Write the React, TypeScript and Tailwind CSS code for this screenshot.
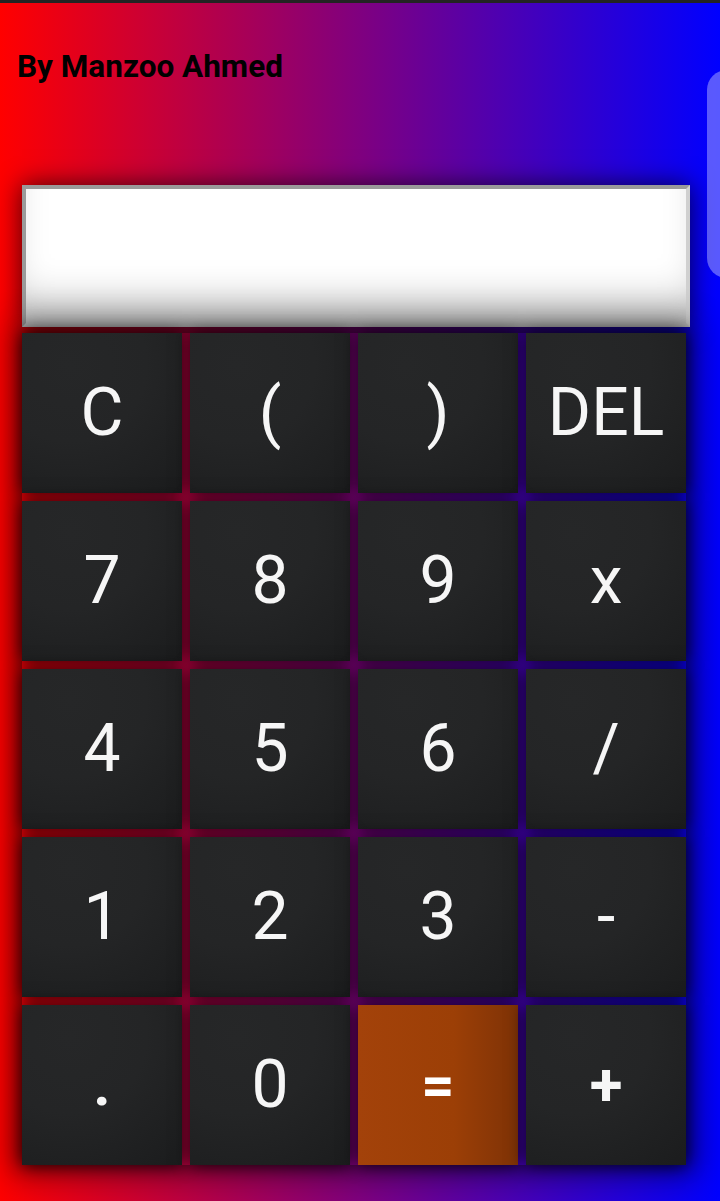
import React from "react";

const keys: { label: string; eq?: boolean }[] = [
  { label: "C" }, { label: "(" }, { label: ")" }, { label: "DEL" },
  { label: "7" }, { label: "8" }, { label: "9" }, { label: "x" },
  { label: "4" }, { label: "5" }, { label: "6" }, { label: "/" },
  { label: "1" }, { label: "2" }, { label: "3" }, { label: "-" },
  { label: "." }, { label: "0" }, { label: "=", eq: true }, { label: "+" },
];

export default function App() {
  return (
    <div
      className="relative w-[720px] h-[1201px] overflow-hidden border-t-[3px] border-[#232323] bg-[linear-gradient(to_right,#ff0000,#0000ff)]"
      style={{ fontFamily: "Roboto, 'Noto Sans', sans-serif" }}
    >
      <div className="pl-[17px] pt-[46px] text-[31.5px] font-bold leading-[36px] text-black">
        By Manzoo Ahmed
      </div>

      <div className="ml-[22px] mt-[100px] w-[668px] h-[142px] border-[4px] border-t-[#9a9a9a] border-l-[#9a9a9a] border-b-[#c4c4c4] border-r-[#d0d0d0] bg-white shadow-[inset_0_-40px_40px_-20px_rgba(0,0,0,0.28),0_0_24px_rgba(0,0,0,0.7)]" />

      <div className="ml-[22px] mt-[6px] grid w-[664px] grid-cols-4 gap-[8px] shadow-[0_0_30px_10px_rgba(0,0,0,0.45)]">
        {keys.map((k) => (
          <div
            key={k.label}
            className={
              k.eq
                ? "flex h-[160px] items-center justify-center bg-[linear-gradient(to_right,#a3420a,#9c3f06_60%,#7e3206)] text-[58px] font-bold leading-none text-white shadow-[0_0_16px_rgba(0,0,0,0.9)]"
                : "flex h-[160px] items-center justify-center bg-[radial-gradient(circle_at_30%_20%,#262728,#242526_45%,#1b1c1d)] text-[66px] leading-none text-[#f6f6f6] shadow-[0_0_16px_rgba(0,0,0,0.9)]"
            }
          >
            <span className={k.label === "." || k.label === "+" ? "font-bold text-[60px]" : ""}>{k.label}</span>
          </div>
        ))}
      </div>

      <div className="absolute left-[707px] top-[67px] h-[208px] w-[40px] rounded-[20px] bg-white/35" />
    </div>
  );
}
